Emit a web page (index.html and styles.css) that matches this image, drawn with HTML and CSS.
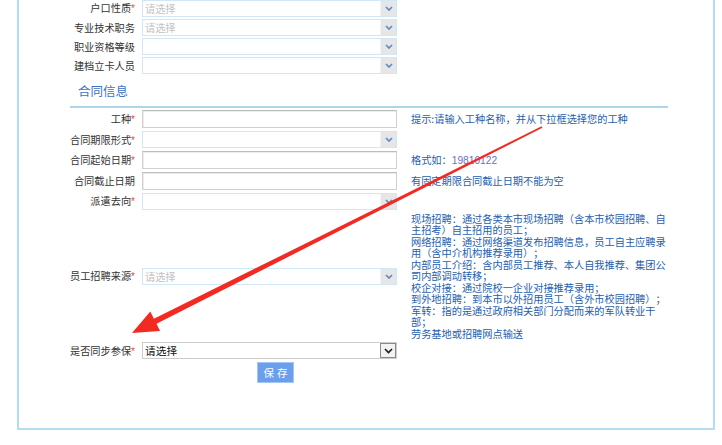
FILE: index.html
```html
<!DOCTYPE html>
<html lang="zh-CN">
<head>
  <meta charset="UTF-8" />
  <title>合同信息</title>
  <link rel="stylesheet" href="styles.css">
</head>
<body>

<div class="panel">
  <table class="form">
    <tr>
      <td class="label">户口性质<i>*</i></td>
      <td class="field"><div class="select"><span class="ph">请选择</span><span class="drop"><svg width="8" height="5" viewBox="0 0 8 5"><path d="M1 1l3 3 3-3" /></svg></span></div></td>
      <td class="hint"></td>
    </tr>
    <tr>
      <td class="label">专业技术职务</td>
      <td class="field"><div class="select"><span class="ph">请选择</span><span class="drop"><svg width="8" height="5" viewBox="0 0 8 5"><path d="M1 1l3 3 3-3" /></svg></span></div></td>
      <td class="hint"></td>
    </tr>
    <tr>
      <td class="label">职业资格等级</td>
      <td class="field"><div class="select"><span class="ph"></span><span class="drop"><svg width="8" height="5" viewBox="0 0 8 5"><path d="M1 1l3 3 3-3" /></svg></span></div></td>
      <td class="hint"></td>
    </tr>
    <tr>
      <td class="label">建档立卡人员</td>
      <td class="field"><div class="select"><span class="ph"></span><span class="drop"><svg width="8" height="5" viewBox="0 0 8 5"><path d="M1 1l3 3 3-3" /></svg></span></div></td>
      <td class="hint"></td>
    </tr>
  </table>

  <div class="section-title">合同信息</div>

  <table class="form contract">
    <tr>
      <td class="label">工种<i>*</i></td>
      <td class="field"><div class="text"></div></td>
      <td class="hint">提示:请输入工种名称，并从下拉框选择您的工种</td>
    </tr>
    <tr>
      <td class="label">合同期限形式<i>*</i></td>
      <td class="field"><div class="select"><span class="ph"></span><span class="drop"><svg width="8" height="5" viewBox="0 0 8 5"><path d="M1 1l3 3 3-3" /></svg></span></div></td>
      <td class="hint"></td>
    </tr>
    <tr>
      <td class="label">合同起始日期<i>*</i></td>
      <td class="field"><div class="text"></div></td>
      <td class="hint">格式如：<span class="num">19810122</span></td>
    </tr>
    <tr>
      <td class="label">合同截止日期</td>
      <td class="field"><div class="text"></div></td>
      <td class="hint">有固定期限合同截止日期不能为空</td>
    </tr>
    <tr>
      <td class="label">派遣去向<i>*</i></td>
      <td class="field"><div class="select"><span class="ph"></span><span class="drop"><svg width="8" height="5" viewBox="0 0 8 5"><path d="M1 1l3 3 3-3" /></svg></span></div></td>
      <td class="hint"></td>
    </tr>
    <tr>
      <td class="label">员工招聘来源<i>*</i></td>
      <td class="field"><div class="select"><span class="ph">请选择</span><span class="drop"><svg width="8" height="5" viewBox="0 0 8 5"><path d="M1 1l3 3 3-3" /></svg></span></div></td>
      <td class="hint block">现场招聘：通过各类本市现场招聘（含本市校园招聘、自主招考）自主招用的员工；<br>网络招聘：通过网络渠道发布招聘信息，员工自主应聘录用（含中介机构推荐录用）；<br>内部员工介绍：含内部员工推荐、本人自我推荐、集团公司内部调动转移；<br>校企对接：通过院校一企业对接推荐录用；<br>到外地招聘：到本市以外招用员工（含外市校园招聘）；<br>军转：指的是通过政府相关部门分配而来的军队转业干部；<br>劳务基地或招聘网点输送</td>
    </tr>
    <tr>
      <td class="label">是否同步参保<i>*</i></td>
      <td class="field"><div class="select native"><span class="ph">请选择</span><span class="drop"><svg width="9" height="6" viewBox="0 0 9 6"><path d="M1 1l3.5 3.5 3.5-3.5" /></svg></span></div></td>
      <td class="hint"></td>
    </tr>
    <tr>
      <td class="label"></td>
      <td class="field"><button class="save">保存</button></td>
      <td class="hint"></td>
    </tr>
  </table>
</div>

<!-- annotation arrow drawn over the form -->
<svg class="mark" width="722" height="445" viewBox="0 0 722 445">
  <polygon points="541.6,126.3 542.4,127.7 156.5,323.8 160.1,331.1 132,333 150.3,311.5 153.9,318.8" />
</svg>

</body>
</html>
```

FILE: styles.css
```css
body {
  margin: 0;
  padding: 0;
  background: #fff;
  font-family: "Noto Sans CJK SC", "Liberation Sans", sans-serif;
  font-size: 10.2px;
  color: #333;
  position: relative;
  overflow: hidden;
  height: 445px;
}

.panel {
  margin: -2px 0 0 17px;
  width: 694px;
  border: 2px solid #b2ddf3;
  border-top: none;
  padding-bottom: 43px;
}

.form {
  border-collapse: collapse;
  border-spacing: 0;
}

.form td {
  padding: 1px 0;
  vertical-align: middle;
}

.contract {
  margin-top: 1px;
}

.contract td {
  padding: 1.25px 0;
}

.form .label {
  width: 116px;
  padding-right: 2px;
  text-align: right;
  line-height: 17px;
  white-space: nowrap;
}

.label i {
  font-style: normal;
  font-family: "Liberation Sans", sans-serif;
  font-size: 10px;
  color: #ee4444;
}

.form .field {
  width: 255px;
  padding-left: 5px;
}

.form .hint {
  width: 260px;
  padding-left: 14px;
  color: #2560ae;
  line-height: 12px;
  text-spacing-trim: space-all;
}

.form .hint.block {
  line-height: 11.5px;
}

.hint .num {
  font-family: "Liberation Sans", sans-serif;
  color: #6a6fc0;
}

.select {
  display: flex;
  align-items: stretch;
  height: 17px;
  box-sizing: border-box;
  border: 1px solid #cfe7f6;
  background: #fff;
}

.select .ph {
  flex: 1;
  padding-left: 2px;
  line-height: 15px;
  color: #c2c2c2;
}

.select .drop {
  width: 15px;
  background: #e6e6e6;
  border-left: 1px solid #eef5fa;
  display: flex;
  align-items: center;
  justify-content: center;
}

.select .drop path {
  fill: none;
  stroke: #5b8cc8;
  stroke-width: 1.7;
}

.select.native {
  border-color: #cccccc;
}

.select.native .ph {
  color: #111;
  font-size: 10.7px;
}

.select.native .drop {
  background: #f2f2f2;
  border: 1px solid #8a8a8a;
  width: 14px;
}

.select.native .drop path {
  stroke: #1a1a2a;
  stroke-width: 1.6;
}

.text {
  height: 18px;
  box-sizing: border-box;
  border: 1px solid #d0d0d0;
  border-top-color: #bdbdbd;
  box-shadow: inset 1px 1px 0 #ececec;
  background: #fff;
}

.section-title {
  margin-left: 51px;
  width: 590px;
  padding: 8px 0 7px 8px;
  line-height: 16px;
  font-size: 12.5px;
  color: #3f72c2;
  border-bottom: 2px solid #acd6ea;
}

.save {
  margin-left: 115px;
  width: 37px;
  height: 21px;
  padding: 0;
  border: 1px solid #a4c4f2;
  background: #6b9eec;
  color: #fff;
  font-family: "Noto Sans CJK SC", sans-serif;
  font-size: 10.5px;
  letter-spacing: 3px;
  text-indent: 3px;
  cursor: pointer;
}

/* red annotation arrow */
.mark {
  position: absolute;
  top: 0;
  left: 0;
  pointer-events: none;
}

.mark polygon {
  fill: #f22a22;
}
```
